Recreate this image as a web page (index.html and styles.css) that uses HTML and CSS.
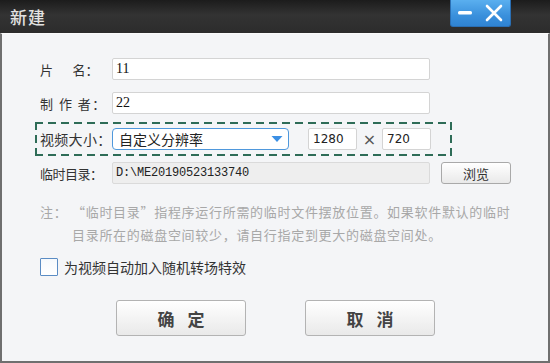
FILE: index.html
```html
<!DOCTYPE html>
<html lang="zh-CN">
<head>
<meta charset="utf-8">
<title>新建</title>
<link rel="stylesheet" href="styles.css">
</head>
<body>
<div class="win">
  <div class="titlebar">
    <span class="title">新建</span>
    <div class="ctrls">
      <svg class="ico" width="20" height="26" viewBox="0 0 20 26"><rect x="3" y="11" width="14" height="3.5" rx="1.5" fill="#fff"/></svg>
      <svg class="ico" width="24" height="26" viewBox="0 0 24 26"><path d="M5 6 L19 20 M19 6 L5 20" stroke="#fff" stroke-width="2.6" stroke-linecap="round"/></svg>
    </div>
  </div>
  <div class="body">
    <div class="row">
      <span class="lbl">片&emsp;&ensp;名：</span>
      <div class="field wide">11</div>
    </div>
    <div class="row gap12">
      <span class="lbl sp">制 作 者：</span>
      <div class="field wide">22</div>
    </div>
    <div class="dashed">
      <div class="row">
        <span class="lbl wide-lbl">视频大小：</span>
        <div class="select">
          <span>自定义分辨率</span>
          <svg width="12" height="8" viewBox="0 0 12 8"><path d="M0.5 1 L11.5 1 L6 7 Z" fill="#3b8fe4"/></svg>
        </div>
        <div class="field num n1">1280</div>
        <span class="times">×</span>
        <div class="field num">720</div>
      </div>
    </div>
    <div class="row gap6">
      <span class="lbl narrow-lbl">临时目录：</span>
      <div class="field wide ro mono">D:\ME20190523133740</div>
      <div class="btn small">浏览</div>
    </div>
    <div class="note">
      <span class="note-k">注：</span>
      <span class="note-t">“临时目录”指程序运行所需的临时文件摆放位置。如果软件默认的临时<br>目录所在的磁盘空间较少，请自行指定到更大的磁盘空间处。</span>
    </div>
    <div class="check">
      <span class="box"></span>
      <span class="check-t">为视频自动加入随机转场特效</span>
    </div>
    <div class="actions">
      <div class="btn big">确定</div>
      <div class="btn big">取消</div>
    </div>
  </div>
</div>
</body>
</html>
```
FILE: styles.css
```css
* { box-sizing: border-box; }
html, body { margin: 0; padding: 0; }
body {
  width: 550px;
  height: 363px;
  overflow: hidden;
  font-family: "Noto Sans CJK SC", "Liberation Sans", sans-serif;
  background: #f4f5f7;
}
.win {
  width: 550px;
  height: 363px;
  display: flex;
  flex-direction: column;
}
.titlebar {
  height: 33px;
  flex: none;
  background: linear-gradient(#1c1c1c, #333 45%, #2c2c2c);
  display: flex;
  justify-content: space-between;
  align-items: flex-start;
  padding: 0 39px 0 10px;
}
.title {
  color: #e2e2e2;
  font-size: 17px;
  line-height: 33px;
  font-weight: 500;
  letter-spacing: 1px;
}
.ctrls {
  width: 61px;
  height: 27px;
  background: linear-gradient(#5aafef, #3a90dc 60%, #2f83d2);
  border: 1px solid #2a6fb4;
  border-top: none;
  border-radius: 0 0 3px 3px;
  display: flex;
  align-items: center;
  justify-content: space-between;
  padding: 0 4px 0 4px;
}
.ico { display: block; }
.body {
  flex: 1;
  background: #f4f5f7;
  border: 2px solid #6f6f6f;
  border-top: 1px solid #fafafa;
  padding: 24px 0 0 38px;
  color: #333;
  font-size: 13px;
}
.row {
  display: flex;
  align-items: center;
  height: 22px;
}
.gap12 { margin-top: 12px; }
.gap6 { margin-top: 6px; }
.lbl {
  width: 72px;
  flex: none;
  font-size: 13px;
  color: #333;
  white-space: pre;
}
.lbl.sp { letter-spacing: 1.5px; }
.wide-lbl { font-size: 14px; letter-spacing: 0.3px; }
.narrow-lbl { font-size: 13px; letter-spacing: -0.5px; }
.field {
  height: 22px;
  background: #fff;
  border: 1px solid #d4d4d4;
  border-radius: 2px;
  padding-left: 3px;
  font-family: "Liberation Serif", serif;
  font-size: 14px;
  line-height: 20px;
  color: #111;
}
.field.wide { width: 318px; }
.field.ro { background: #eeeeee; border-color: #dadada; }
.mono {
  font-family: "Liberation Mono", monospace;
  font-size: 12px;
  letter-spacing: -0.2px;
  color: #222;
}
.dashed {
  margin: 8px 0 0 -5px;
  width: 417px;
  height: 34px;
  padding: 6px 0 0 5px;
  background:
    repeating-linear-gradient(90deg, #2e6c57 0 8px, transparent 8px 13px) left top / 100% 2px no-repeat,
    repeating-linear-gradient(90deg, #2e6c57 0 8px, transparent 8px 13px) left bottom / 100% 2px no-repeat,
    repeating-linear-gradient(180deg, #2e6c57 0 8px, transparent 8px 13px) left top / 2px 100% no-repeat,
    repeating-linear-gradient(180deg, #2e6c57 0 8px, transparent 8px 13px) right top / 2px 100% no-repeat;
}
.select {
  width: 177px;
  height: 22px;
  background: #fff;
  border: 1px solid #4f98dc;
  border-radius: 4px;
  display: flex;
  align-items: center;
  justify-content: space-between;
  padding: 0 5px 0 6px;
  font-size: 14px;
  color: #222;
}
.select svg { display: block; }
.num {
  width: 49px;
  font-family: "DejaVu Sans", sans-serif;
  font-size: 12px;
  color: #222;
  padding-left: 4px;
}
.n1 { margin-left: 19px; }
.times {
  width: 25px;
  text-align: center;
  font-size: 16px;
  color: #555;
  font-family: "DejaVu Sans", sans-serif;
}
.btn {
  background: linear-gradient(#ffffff, #f4f4f4 50%, #e9e9e9);
  border: 1px solid #a9a9a9;
  border-radius: 3px;
  display: flex;
  align-items: center;
  justify-content: center;
  color: #333;
}
.btn.small {
  width: 70px;
  height: 22px;
  margin-left: 11px;
  font-size: 13px;
}
.note {
  margin-top: 16px;
  display: flex;
  color: #a8a8a8;
  font-size: 13px;
  line-height: 23px;
  letter-spacing: 0.7px;
}
.note-k { width: 32px; flex: none; }
.check {
  margin-top: 12px;
  display: flex;
  align-items: center;
  height: 18px;
}
.box {
  width: 18px;
  height: 18px;
  border: 1px solid #5a8cc4;
  background: linear-gradient(#f6f9fc, #ffffff);
  border-radius: 1px;
}
.check-t {
  margin-left: 6px;
  font-size: 14px;
  color: #333;
}
.actions {
  margin-top: 24px;
  display: flex;
  gap: 59px;
  padding-left: 76px;
}
.btn.big {
  width: 130px;
  height: 36px;
  font-size: 17px;
  font-weight: bold;
  color: #444;
  letter-spacing: 13px;
  padding-left: 13px;
  border-color: #b3b3b3;
}
```
